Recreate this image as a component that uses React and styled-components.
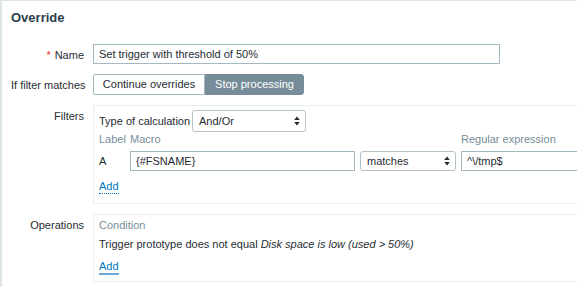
import React from 'react';
import styled, { createGlobalStyle } from 'styled-components';

const GlobalStyle = createGlobalStyle`
  html, body {
    margin: 0;
    padding: 0;
    background: #fff;
    overflow: hidden;
  }
  body {
    font-family: "Liberation Sans", Arial, sans-serif;
    font-size: 11px;
    color: #1f2c33;
  }
`;

const Card = styled.section`
  overflow: hidden;
  border-top: 1px solid #dfe4e7;
  border-left: 2px solid #dde4e8;
  padding: 9px 0 10px 9px;
`;

const Title = styled.h2`
  margin: 0 0 18px;
  font-size: 13px;
  line-height: 16px;
  font-weight: bold;
  color: #2b3f4c;
`;

const Form = styled.div`
  width: 760px;
  display: grid;
  grid-template-columns: 73px 1fr;
  column-gap: 9px;
  row-gap: 10px;
`;

const Label = styled.div`
  text-align: right;
  padding-top: 4px;
  line-height: 14px;
  white-space: nowrap;
`;

const Required = styled.span`
  color: #e33734;
  margin-right: 4px;
`;

const Field = styled.div`
  box-sizing: border-box;
  width: ${p => p.$w}px;
  height: 20px;
  padding: 0 5px;
  border: 1px solid #a4b8c2;
  background: #fff;
  line-height: 18px;
  white-space: nowrap;
  overflow: hidden;
`;

const Segmented = styled.div`
  display: flex;
`;

const SegButton = styled.div`
  box-sizing: border-box;
  width: ${p => p.$w}px;
  height: 21px;
  line-height: 19px;
  text-align: center;
  border: 1px solid ${p => (p.$active ? '#768d99' : '#a4b8c2')};
  background: ${p => (p.$active ? '#768d99' : '#fff')};
  color: ${p => (p.$active ? '#fff' : '#1f2c33')};
  border-radius: ${p => (p.$active ? '0 3px 3px 0' : '2px 0 0 2px')};
`;

const Box = styled.div`
  border: 1px solid #ebeef0;
  padding: ${p => p.$pad};
`;

const CalcRow = styled.div`
  display: flex;
  align-items: center;
`;

const CalcLabel = styled.span`
  width: 93px;
  white-space: nowrap;
`;

const Select = styled.div`
  box-sizing: border-box;
  width: ${p => p.$w}px;
  height: ${p => p.$h}px;
  display: flex;
  align-items: center;
  justify-content: space-between;
  padding: 0 5px 0 6px;
  border: 1px solid #b4c3ca;
  border-radius: 3px;
  background: #fff;
`;

const FilterTable = styled.div`
  display: grid;
  grid-template-columns: 26px 225px 96px 225px;
  column-gap: 5px;
  row-gap: 5px;
  align-items: center;
`;

const Head = styled.div`
  color: #768d99;
  line-height: 14px;
  white-space: nowrap;
`;

const Link = styled.a`
  display: inline-block;
  margin-top: 9px;
  color: #0275b8;
  line-height: 13px;
  text-decoration: none;
  border-bottom: ${p => (p.$focus ? '2px solid #6aa6d6' : '1px dotted #0275b8')};
  cursor: pointer;
`;

const Line = styled.div`
  line-height: 14px;
  margin-top: ${p => p.$mt || 0}px;
  white-space: nowrap;
`;

const Arrows = () => (
  <svg width="6" height="10" viewBox="0 0 6 10">
    <path d="M3 0.5 L5.8 4 H0.2 Z M3 9.5 L5.8 6 H0.2 Z" fill="#1f2c33" />
  </svg>
);

export default function App() {
  return (
    <>
      <GlobalStyle />
      <Card>
        <Title>Override</Title>
        <Form>
          <Label>
            <Required>*</Required>Name
          </Label>
          <Field $w={407}>Set trigger with threshold of 50%</Field>

          <Label>If filter matches</Label>
          <Segmented>
            <SegButton $w={112}>Continue overrides</SegButton>
            <SegButton $w={99} $active>Stop processing</SegButton>
          </Segmented>

          <Label>Filters</Label>
          <Box $pad="4px 5px 9px">
            <CalcRow>
              <CalcLabel>Type of calculation</CalcLabel>
              <Select $w={114} $h={22}>
                <span>And/Or</span>
                <Arrows />
              </Select>
            </CalcRow>
            <FilterTable>
              <Head>Label</Head>
              <Head>Macro</Head>
              <Head />
              <Head>Regular expression</Head>
              <div>A</div>
              <Field $w={225}>{'{#FSNAME}'}</Field>
              <Select $w={96} $h={20}>
                <span>matches</span>
                <Arrows />
              </Select>
              <Field $w={225}>^\/tmp$</Field>
            </FilterTable>
            <Link>Add</Link>
          </Box>

          <Label>Operations</Label>
          <Box $pad="3px 5px 6px">
            <Head>Condition</Head>
            <Line $mt={5}>
              Trigger prototype does not equal <i>Disk space is low (used &gt; 50%)</i>
            </Line>
            <Link $focus>Add</Link>
          </Box>
        </Form>
      </Card>
    </>
  );
}
